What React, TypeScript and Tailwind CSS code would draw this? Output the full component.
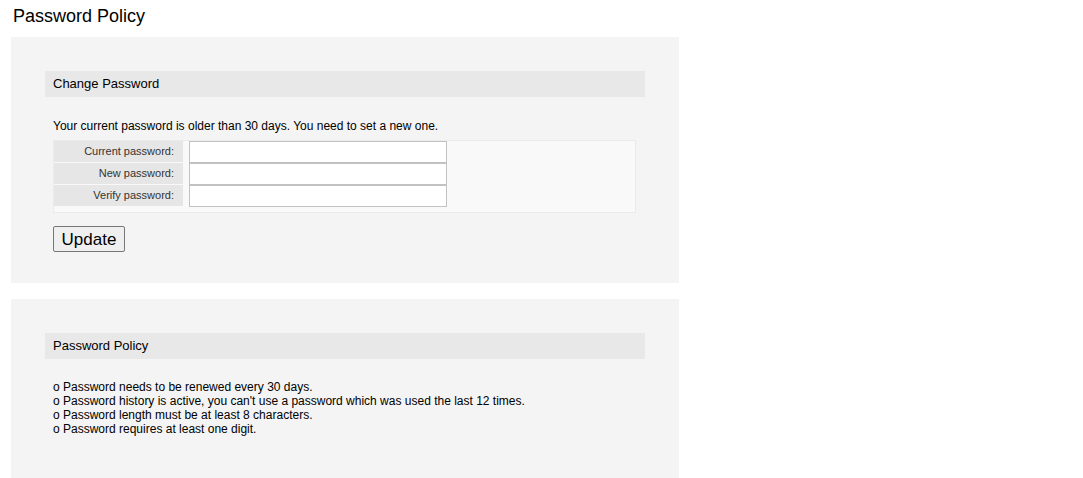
export default function App() {
  const fields = ["Current password:", "New password:", "Verify password:"];

  return (
    <main className="min-h-screen bg-white text-black font-['Liberation_Sans',Arial,sans-serif] pl-[11px] pr-[404px]">
      <h1 className="text-[18px] leading-[22px] pt-[5px] pl-[2px] h-[37px]">Password Policy</h1>

      {/* Change password */}
      <section className="bg-[#f4f4f4] px-[34px] pt-[34px] pb-[31px]">
        <div className="bg-[#e8e8e8] h-[26px] flex items-center px-2 text-[13px]">Change Password</div>
        <div className="px-2">
          <p className="text-[12px] leading-[14px] mt-[22px]">
            Your current password is older than 30 days. You need to set a new one.
          </p>
          <div className="mt-[7px] mr-[1px] border border-[#ebebeb] bg-[#f9f9f9] pb-[5px] flex flex-col">
            {fields.map((label) => (
              <div key={label} className="flex h-[22px]">
                <div className="w-[129px] h-[21px] bg-[#e6e6e6] text-[11px] text-[#333] flex items-center justify-end pr-[9px]">
                  {label}
                </div>
                <input
                  type="password"
                  className="ml-[6px] w-[258px] h-[22px] bg-white border border-[#c2c2c2] outline-none"
                />
              </div>
            ))}
          </div>
          <button className="mt-[13px] h-[26px] w-[72px] bg-[#efefef] border border-[#767676] rounded-[2px] text-[17px] leading-none">
            Update
          </button>
        </div>
      </section>

      {/* Policy */}
      <section className="bg-[#f4f4f4] mt-[16px] px-[34px] pt-[34px] pb-[42px]">
        <div className="bg-[#e8e8e8] h-[26px] flex items-center px-2 text-[13px]">Password Policy</div>
        <div className="px-2 mt-[21px] text-[12px] leading-[14px]">
          <div>o Password needs to be renewed every 30 days.</div>
          <div>o Password history is active, you can't use a password which was used the last 12 times.</div>
          <div>o Password length must be at least 8 characters.</div>
          <div>o Password requires at least one digit.</div>
        </div>
      </section>
    </main>
  );
}
